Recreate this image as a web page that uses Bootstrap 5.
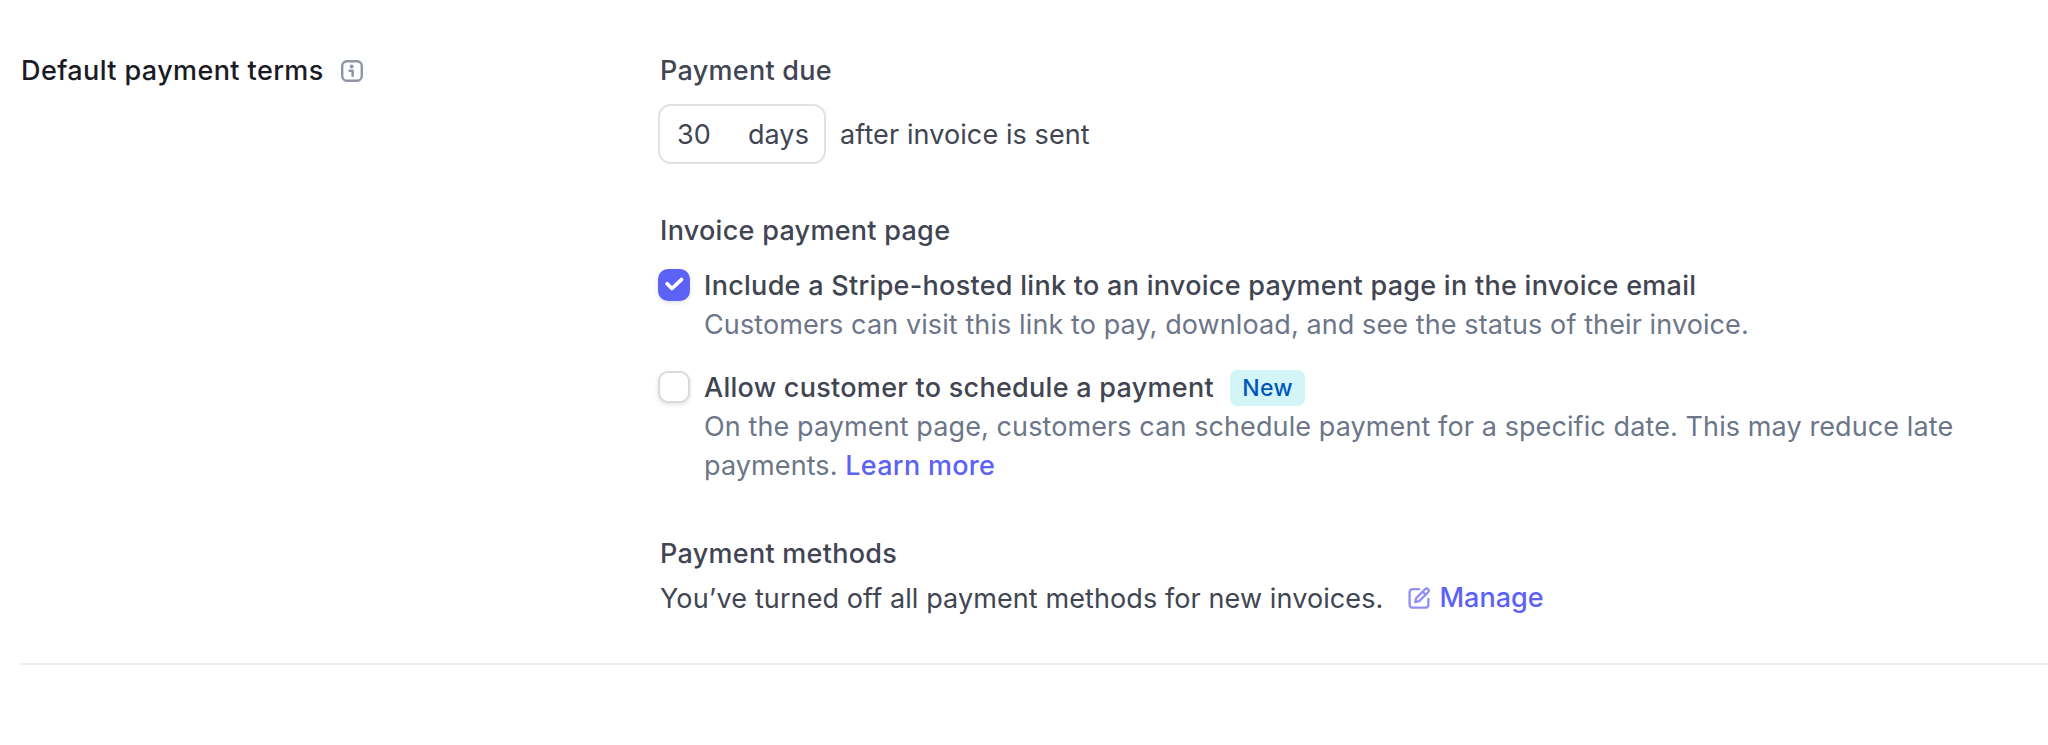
<!DOCTYPE html>
<html lang="en">
<head>
<meta charset="utf-8">
<meta name="viewport" content="width=device-width, initial-scale=1">
<title>Default payment terms</title>
<link href="https://cdn.jsdelivr.net/npm/bootstrap@5.3.0/dist/css/bootstrap.min.css" rel="stylesheet">
<style>
body{font-family:Inter,"Liberation Sans",sans-serif;font-size:27px;line-height:40px;color:#414552;background:#fff;letter-spacing:.1px}
.terms{margin-left:21px;padding:51px 0 44px;border-bottom:2px solid #ebebef}
.terms-side{width:639px;height:40px;color:#1a1b25;gap:17px}
.terms-main{width:1310px}
.strong{font-weight:500;letter-spacing:.28px}
.terms-side.strong{letter-spacing:.4px}
.due-box{width:168px;height:60px;margin-left:-2px;border:2px solid #e0e1e5;border-radius:13px;padding:1px 15px 0 17px}
.due-row{margin-top:13px;gap:14px}
.after{padding-top:1px}
.group-gap{margin-top:47px}
.opt{margin-left:-2px;gap:14px}
.opt .form-check-input{width:32px;height:32px;margin:1.5px 0 0;border-radius:10px;border:2px solid #d9dade;box-shadow:0 2px 4px rgba(60,66,87,.14);flex:none}
.opt .form-check-input:checked{border:0;background-color:#5d62f6;background-size:100% 100%;background-image:url("data:image/svg+xml,%3Csvg xmlns='http://www.w3.org/2000/svg' viewBox='0 0 33 32'%3E%3Cpath d='M9.4 14.7l5 4.9 9.8-9.2' fill='none' stroke='%23fff' stroke-width='3.8' stroke-linecap='round' stroke-linejoin='round'/%3E%3C/svg%3E")}
.opt-title{line-height:38px;height:38px;gap:16px}
.opt-desc{line-height:39px;color:#6c7688}
.opt-next{margin-top:25px}
.accent{color:#5d62f6;text-decoration:none}
.new-pill{background:#d3f5f7;color:#0055bc;font-size:23px;font-weight:500;line-height:37px;height:36px;width:75px;border-radius:7px}
.methods{margin-top:49px}
.methods-row{margin-top:5px}
.manage{margin-left:25px;gap:7px;letter-spacing:0;line-height:38px;height:40px}
.manage svg{margin-top:8px}
</style>
</head>
<body>
<main class="terms d-flex">
  <div class="terms-side strong d-flex align-items-center flex-shrink-0">
    <span>Default payment terms</span>
    <svg width="22" height="22" viewBox="0 0 22 22" fill="none" stroke="#8d95a5"><rect x="1.2" y="1.2" width="19.6" height="19.6" rx="4.8" stroke-width="2.4"/><circle cx="10.7" cy="6.5" r="1.9" fill="#8d95a5" stroke="none"/><path d="M8.6 10.7h3v5" stroke-width="2.5" stroke-linecap="round" stroke-linejoin="round"/></svg>
  </div>
  <div class="terms-main">
    <div class="strong">Payment due</div>
    <div class="due-row d-flex align-items-center">
      <div class="due-box d-flex justify-content-between align-items-center"><span>30</span><span>days</span></div>
      <span class="after">after invoice is sent</span>
    </div>

    <div class="group-gap strong">Invoice payment page</div>
    <div class="opt d-flex mt-3">
      <input class="form-check-input" type="checkbox" id="hosted" checked>
      <div>
        <label class="opt-title strong d-flex" for="hosted">Include a Stripe-hosted link to an invoice payment page in the invoice email</label>
        <div class="opt-desc">Customers can visit this link to pay, download, and see the status of their invoice.</div>
      </div>
    </div>
    <div class="opt opt-next d-flex">
      <input class="form-check-input" type="checkbox" id="schedule">
      <div>
        <label class="opt-title strong d-flex align-items-center" for="schedule">Allow customer to schedule a payment <span class="new-pill text-center">New</span></label>
        <div class="opt-desc">On the payment page, customers can schedule payment for a specific date. This may reduce late<br>payments. <a class="accent strong" href="#">Learn more</a></div>
      </div>
    </div>

    <div class="methods strong">Payment methods</div>
    <div class="methods-row d-flex align-items-center">
      <span>You’ve turned off all payment methods for new invoices.</span>
      <a class="manage accent fw-medium strong d-flex" href="#">
        <svg width="24" height="22" viewBox="0 0 24 22" fill="none" stroke="#918df9" stroke-width="2.3" stroke-linejoin="round" stroke-linecap="round"><path d="M11 2.200H4.600a3 3 0 0 0-3 3v12.500a3 3 0 0 0 3 3h12.800a3 3 0 0 0 3-3V12"/><path d="M7.200 15.200l1-4.100 8.900-8.900a2.100 2.100 0 0 1 3 3L11.200 14.100z"/><path d="M14.700 4.800l2.900 2.900"/></svg>
        <span>Manage</span>
      </a>
    </div>
  </div>
</main>
<script src="https://cdn.jsdelivr.net/npm/bootstrap@5.3.0/dist/js/bootstrap.bundle.min.js"></script>
</body>
</html>
